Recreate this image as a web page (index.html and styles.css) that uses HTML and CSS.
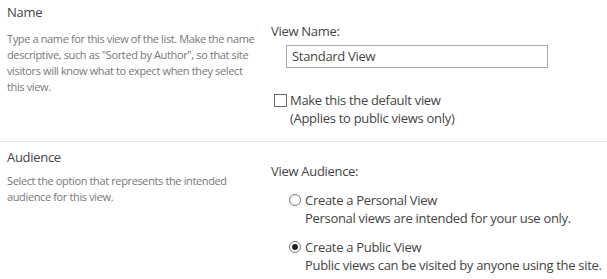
FILE: index.html
```html
<!DOCTYPE html>
<html>
<head>
<meta charset="utf-8">
<link rel="stylesheet" href="styles.css">
</head>
<body>
<div class="form">
  <section class="section section-name">
    <div class="info">
      <h3 class="info-title">Name</h3>
      <p class="info-desc">Type a name for this view of the list. Make the name descriptive, such as "Sorted by Author", so that site visitors will know what to expect when they select this view.</p>
    </div>
    <div class="fields">
      <div class="field-label">View Name:</div>
      <div class="text-input">Standard View</div>
      <div class="check-row">
        <span class="checkbox"></span>
        <div class="option-text">
          <div>Make this the default view</div>
          <div>(Applies to public views only)</div>
        </div>
      </div>
    </div>
  </section>
  <section class="section section-audience">
    <div class="info">
      <h3 class="info-title">Audience</h3>
      <p class="info-desc">Select the option that represents the intended audience for this view.</p>
    </div>
    <div class="fields">
      <div class="field-label">View Audience:</div>
      <div class="radio-row">
        <span class="radio"></span>
        <div class="option-text">
          <div>Create a Personal View</div>
          <div>Personal views are intended for your use only.</div>
        </div>
      </div>
      <div class="radio-row">
        <span class="radio checked"></span>
        <div class="option-text">
          <div>Create a Public View</div>
          <div>Public views can be visited by anyone using the site.</div>
        </div>
      </div>
    </div>
  </section>
</div>
</body>
</html>
```
FILE: styles.css
```css
* { box-sizing: border-box; }
html, body { margin: 0; padding: 0; background: #fff; }
body {
  font-family: "Open Sans", "Noto Sans", sans-serif;
  color: #444;
  font-size: 13px;
  line-height: 16px;
  letter-spacing: -0.3px;
}
.section {
  display: flex;
}
.section-name {
  height: 142px;
  border-bottom: 1px solid #e1e1e1;
}
.info {
  width: 271px;
  padding-left: 7px;
  padding-right: 9px;
}
.section-name .info { padding-top: 4px; }
.section-audience .info { padding-top: 7px; }
.info-title {
  margin: 0;
  font-size: 13px;
  font-weight: normal;
  line-height: 16px;
  color: #444;
}
.info-desc {
  margin: 0;
  font-size: 11px;
  line-height: 16px;
  letter-spacing: -0.37px;
  color: #777;
}
.section-name .info-desc { margin-top: 11px; }
.section-audience .info-desc { margin-top: 8px; }
.fields {
  flex: 1;
}
.section-name .fields { padding-top: 23px; }
.section-audience .fields { padding-top: 21px; }
.field-label {
  line-height: 16px;
}
.text-input {
  margin: 6px 0 0 15px;
  width: 262px;
  height: 23px;
  border: 1px solid #ababab;
  padding-left: 5px;
  line-height: 21px;
}
.check-row {
  display: flex;
  margin: 23px 0 0 3px;
}
.checkbox {
  width: 13px;
  height: 13px;
  border: 1px solid #666;
  margin-top: 3px;
  margin-right: 3px;
  flex: none;
}
.option-text {
  line-height: 18px;
}
.radio-row {
  display: flex;
  margin-left: 18px;
  margin-top: 12px;
}
.radio-row + .radio-row { margin-top: 11px; }
.radio {
  width: 12px;
  height: 12px;
  border: 1px solid #777;
  border-radius: 50%;
  margin-top: 3px;
  margin-right: 4px;
  flex: none;
  display: flex;
  align-items: center;
  justify-content: center;
}
.radio.checked::after {
  content: "";
  width: 6px;
  height: 6px;
  border-radius: 50%;
  background: #222;
}
```
